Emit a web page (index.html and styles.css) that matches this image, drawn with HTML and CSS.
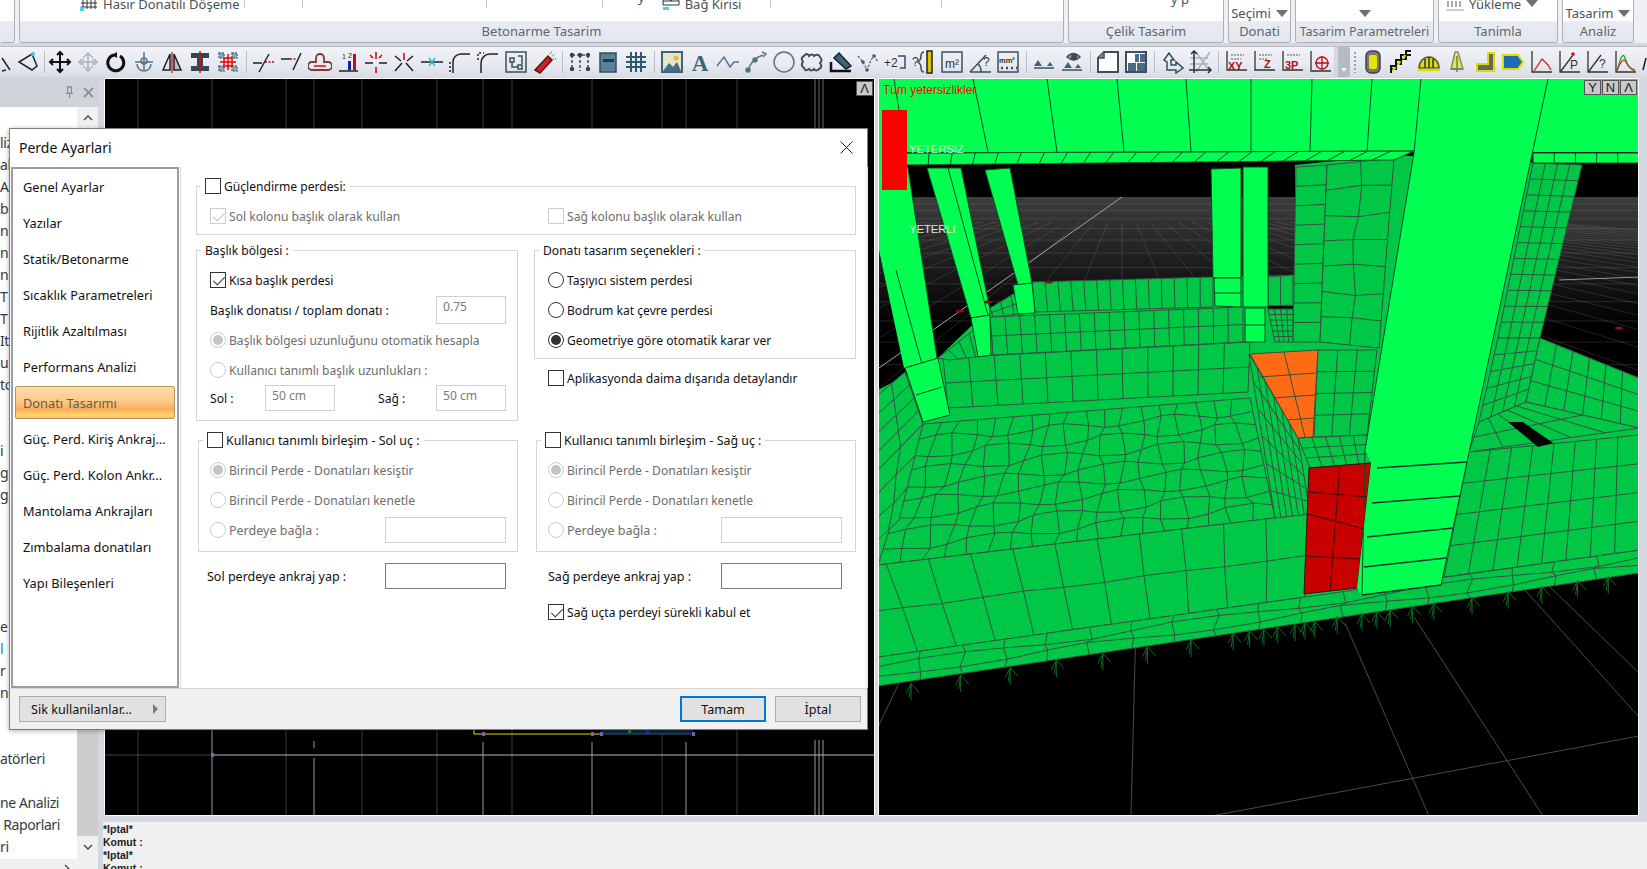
FILE: index.html
```html
<!DOCTYPE html>
<html lang="tr">
<head>
    <meta charset="UTF-8">
    <title>Perde Ayarlari</title>
    <link rel="stylesheet" href="styles.css">
</head>
<body>
    <!-- ribbon, only the lower part is on screen -->
    <div class="ribbon">
        <div class="rb-group g-start"><div class="rb-top"></div><div class="rb-label"></div></div>
        <div class="rb-group g-main">
            <div class="rb-top main-cells">
                <div class="cell c-hasir">
                    <svg class="rb-ic" viewBox="0 0 18 18"><path d="M3 2v14M7 2v14M11 2v14M15 2v14M1 6h16M1 10h16M1 14h16" stroke="#333" fill="none"/><path d="M0 14h4v4H0z" fill="#3cd6ee"/></svg>
                    <span>Hasır Donatılı Döşeme</span>
                </div>
                <div class="cell"></div>
                <div class="cell"></div>
                <div class="cell"></div>
                <div class="cell c-bag">
                    <span class="frag">y</span>
                    <svg class="rb-ic" viewBox="0 0 18 18"><path d="M1 8l4-6 4 6zM9 8l4-6 4 6zM1 8v4h16V8" stroke="#333" fill="none"/><path d="M1 14h6v3H1z" fill="#3cd6ee"/></svg>
                    <span>Bağ Kirisi</span>
                </div>
                <div class="cell"></div>
                <div class="cell"></div>
            </div>
            <div class="rb-label">Betonarme Tasarim</div>
        </div>
        <div class="rb-group g-celik"><div class="rb-top center-top"><span class="frag">y p</span></div><div class="rb-label">Çelik Tasarim</div></div>
        <div class="rb-group g-donati"><div class="rb-top drop-top"><span>Seçimi</span><i class="tri"></i></div><div class="rb-label">Donati</div></div>
        <div class="rb-group g-param"><div class="rb-top drop-top"><i class="tri"></i></div><div class="rb-label tight">Tasarim Parametreleri</div></div>
        <div class="rb-group g-tanim">
            <div class="rb-top yuk-top">
                <svg class="rb-ic" viewBox="0 0 18 12"><path d="M2 1v6M6 1v6M10 1v6M14 1v6" stroke="#556" fill="none"/><path d="M0 10h18" stroke="#7ab" fill="none"/></svg>
                <span>Yükleme</span><i class="tri"></i>
            </div>
            <div class="rb-label">Tanimla</div>
        </div>
        <div class="rb-group g-analiz"><div class="rb-top drop-top"><span>Tasarim</span><i class="tri"></i></div><div class="rb-label">Analiz</div></div>
    </div>

    <!-- toolbars -->
    <div class="toolbars">
        <div class="tb">
            <svg class="ic" viewBox="0 0 24 24"><path d="M14 8l8 12M18 20l-4 1"/></svg>
            <svg class="ic" viewBox="0 0 24 24"><path d="M3 12l13-8 5 12-5 4z"/><circle cx="17" cy="4" r="2" fill="#3ce" stroke="none"/></svg>
            <i class="sep thin"></i>
            <svg class="ic bold" viewBox="0 0 24 24"><path d="M12 2v20M2 12h20M9 5l3-3 3 3M9 19l3 3 3-3M5 9l-3 3 3 3M19 9l3 3-3 3"/></svg>
            <svg class="ic faded" viewBox="0 0 24 24"><path d="M12 3v18M3 12h18M9 6l3-3 3 3M9 18l3 3 3-3M6 9l-3 3 3 3M18 9l3 3-3 3"/><path d="M7 7h10v10H7z" stroke-dasharray="2 2"/></svg>
            <svg class="ic thick" viewBox="0 0 24 24"><path d="M10 5a8 8 0 1 0 6 1"/><path d="M13 2v6l-5-3z" fill="#111" stroke="none"/></svg>
            <svg class="ic blue" viewBox="0 0 24 24"><path d="M12 2v18M3 12h18M5 14a7 7 0 0 0 14 0"/><circle cx="12" cy="11" r="3"/></svg>
            <svg class="ic" viewBox="0 0 24 24"><path d="M10 4L3 20h7z"/><path d="M14 4l7 16h-7z" fill="#bbb"/><path d="M12 2v21" stroke="#b33"/></svg>
            <svg class="ic" viewBox="0 0 24 24"><path d="M3 3h18v5h-6v8h6v5H3v-5h6V8H3z" fill="#2d4a55" stroke="none"/><path d="M12 1v22" stroke="#e00"/></svg>
            <svg class="ic blue" viewBox="0 0 24 24"><path d="M3 3h5v5H3zM16 3h5v5h-5zM3 16h5v5H3zM16 16h5v5h-5z" fill="#8ea6b8" stroke-dasharray="2 1"/><path d="M12 4v16M4 12h16M8 8h8v8H8z" stroke="#e00"/></svg>
            <i class="sep"></i>
            <svg class="ic" viewBox="0 0 24 24"><path d="M1 13h9M17 4L7 22"/><path d="M13 12h9" stroke="#c00" stroke-dasharray="2 1.5"/></svg>
            <svg class="ic" viewBox="0 0 24 24"><path d="M1 9h9M21 3l-8 17"/><path d="M10 9h7" stroke="#c00" stroke-dasharray="2 1.5"/></svg>
            <svg class="ic brown" viewBox="0 0 24 24"><path d="M8 12V8a4 4 0 0 1 8 0v4h4a3 3 0 0 1 0 8H4a3 3 0 0 1 0-8z"/><path d="M6 16h12" stroke="#c33"/></svg>
            <svg class="ic" viewBox="0 0 24 24"><path d="M3 21h19"/><path d="M12 11h3v9h-3z" fill="#12a" stroke="none"/><path d="M17 4h3v16h-3z" fill="#b11" stroke="none"/><text x="6" y="9" class="ic-t">1</text><text x="12" y="8" class="ic-t">2</text></svg>
            <svg class="ic" viewBox="0 0 24 24"><path d="M1 13h8M15 13h8"/><path d="M12 2v7M12 17v6M6 5l3 3M18 5l-3 3" stroke="#c00"/></svg>
            <svg class="ic" viewBox="0 0 24 24"><path d="M3 21l7-8M21 21l-7-8M3 6l6 5M21 6l-6 5"/><path d="M12 3v7" stroke="#c00"/></svg>
            <svg class="ic" viewBox="0 0 24 24"><path d="M1 12h22"/><path d="M9 8l6 8M15 8l-6 8" stroke="#3bd"/></svg>
            <svg class="ic" viewBox="0 0 24 24"><path d="M5 23V12a8 8 0 0 1 8-8h9"/><path d="M2 22V12" stroke-dasharray="2 2"/></svg>
            <svg class="ic" viewBox="0 0 24 24"><path d="M5 23V13a9 9 0 0 1 9-9h8"/><path d="M2 10V3h6" stroke-dasharray="2 2"/></svg>
            <svg class="ic dark" viewBox="0 0 24 24"><path d="M2 2h20v20H2z"/><path d="M6 8h4v4H6zM14 15h4v4h-4zM8 12v5h6M14 6h4v8"/></svg>
            <svg class="ic" viewBox="0 0 24 24"><path d="M3 20L16 6l4 4L8 23z" fill="#c22" stroke="#611"/><path d="M18 4l2-3M20 6l3-2M21 9l3 0" stroke="#888" stroke-dasharray="1 1"/></svg>
            <i class="sep"></i>
            <svg class="ic dark" viewBox="0 0 24 24"><path d="M4 5h16M4 5v16M12 5v16M20 5v16" stroke-dasharray="3 2"/><circle cx="4" cy="5" r="1.5" fill="#222"/><circle cx="12" cy="5" r="1.5" fill="#222"/><circle cx="20" cy="5" r="1.5" fill="#222"/><circle cx="4" cy="19" r="1.5" fill="#222"/><circle cx="20" cy="19" r="1.5" fill="#222"/></svg>
            <svg class="ic" viewBox="0 0 24 24"><path d="M4 3h16v19H4z" fill="#5b8099" stroke="#2f4d5f"/><path d="M7 9h11v3H7z" fill="#1f3a4a" stroke="none"/></svg>
            <svg class="ic dark2" viewBox="0 0 24 24"><path d="M2 7h20M2 12h20M2 17h20M7 2v20M12 2v20M17 2v20" stroke-width="2"/></svg>
            <i class="sep"></i>
            <svg class="ic" viewBox="0 0 24 24"><path d="M2 2h20v20H2z" fill="#e8e4c8" stroke="#3f6378" stroke-width="2"/><path d="M3 21l6-8 4 4 4-5 4 9z" fill="#486f88" stroke="none"/><circle cx="16" cy="8" r="2.5" fill="#e8b93a" stroke="none"/></svg>
            <svg class="ic" viewBox="0 0 24 24"><text x="12" y="21" class="ic-a">A</text></svg>
            <svg class="ic blue" viewBox="0 0 24 24"><path d="M1 16l7-9 6 10 4-5h5"/></svg>
            <svg class="ic blue" viewBox="0 0 24 24"><path d="M4 21a22 22 0 0 1 15-16"/><circle cx="4" cy="20" r="2" fill="#567"/><circle cx="11" cy="10" r="2" fill="#567"/><path d="M18 2l4 2-3 3"/></svg>
            <svg class="ic blue" viewBox="0 0 24 24"><circle cx="12" cy="12" r="10"/></svg>
            <svg class="ic dark" viewBox="0 0 24 24"><path d="M4 6q3-4 5 0 3-3 5 0 4-3 6 1 3 4 0 6 3 4-1 6-3 3-5 0-3 3-5 0-4 3-5-1-4-3-1-6-3-4 1-6z" stroke-width="2"/></svg>
            <svg class="ic" viewBox="0 0 24 24"><path d="M11 3l12 13-5 3L6 8z" fill="#3f6378" stroke="#14232d"/><path d="M3 12v9h20" stroke="#111" stroke-width="2.5"/></svg>
            <svg class="ic thin-blue" viewBox="0 0 24 24"><path d="M2 6l5 6 4 8 4-10 3-4 4 6" stroke-dasharray="2.5 1.5"/><circle cx="7" cy="12" r="1.2" fill="#2c5a74"/><circle cx="11" cy="20" r="1.2" fill="#2c5a74"/><circle cx="18" cy="6" r="1.2" fill="#2c5a74"/></svg>
            <svg class="ic dark" viewBox="0 0 24 24"><text x="0" y="17" class="ic-s">+2</text><path d="M14 6h7v12h-5"/></svg>
            <svg class="ic dark" viewBox="0 0 24 24"><text x="0" y="16" class="ic-s">?</text><path d="M12 2q-3 0-3 4t-3 6q3 2 3 6t3 4"/><path d="M15 1h5v22h-5z" fill="#d9c400" stroke="#222"/></svg>
            <svg class="ic dark" viewBox="0 0 24 24"><path d="M2 2h20v20H2z"/><text x="5" y="18" class="ic-s">m²</text></svg>
            <svg class="ic dark" viewBox="0 0 24 24"><path d="M2 22L18 5M2 22h21M10 14a10 10 0 0 1 3 8"/><text x="15" y="16" class="ic-s">?</text></svg>
            <svg class="ic dark" viewBox="0 0 24 24"><path d="M2 2h20v20H2z"/><text x="3" y="13" class="ic-xs">mm²</text><path d="M5 18h2M10 18h2M15 18h2M20 18h1" stroke-width="2.5"/></svg>
            <i class="sep"></i>
            <svg class="ic dark" viewBox="0 0 24 24"><path d="M2 18h20"/><path d="M6 10l4 6H2zM18 12l3 4h-6z" fill="#3f6378" stroke="none"/></svg>
            <svg class="ic dark" viewBox="0 0 24 24"><path d="M2 20h20"/><path d="M8 12l4 6H4zM18 14l3 4h-6z" fill="#3f6378" stroke="none"/><path d="M7 7q6-7 13 0-6 6-13 0z" fill="#aab" /><circle cx="14" cy="7" r="2.5" fill="#444"/></svg>
            <i class="sep"></i>
            <svg class="ic dark" viewBox="0 0 24 24"><path d="M8 2h14v20H2V8z" fill="#fff" stroke-width="2"/><path d="M2 8h6V2" fill="#888"/></svg>
            <svg class="ic dark" viewBox="0 0 24 24"><path d="M2 2h20v20H2z" fill="#fff" stroke-width="2"/><path d="M11 4h4v8h-4zM16 4h5v8h-5zM4 13h8v8H4zM13 13h8v8h-8z" fill="#4a6b85" stroke="none"/></svg>
            <i class="sep"></i>
            <svg class="ic dark" viewBox="0 0 24 24"><path d="M4 10l5-7 5 7h-3v5h5v-3l7 6-7 5v-3H7v-8z" stroke="#30505f"/></svg>
            <svg class="ic faded" viewBox="0 0 24 24"><path d="M8 2L22 22M22 2L8 22M2 8h18M2 14h18"/><path d="M6 1v22M1 20h22M3 4l3-3 3 3M20 17l3 3-3 3" stroke="#234"/></svg>
            <i class="sep"></i>
            <svg class="ic axis" viewBox="0 0 24 24"><path d="M3 1v19h20"/><path d="M7 5h13M7 9h10" stroke="#889" stroke-dasharray="2 1"/><text x="4" y="20" class="ic-r">XY</text></svg>
            <svg class="ic axis" viewBox="0 0 24 24"><path d="M3 1v19h20"/><path d="M7 5h13M7 9h8" stroke="#889" stroke-dasharray="2 1"/><text x="12" y="18" class="ic-r">Z</text></svg>
            <svg class="ic axis" viewBox="0 0 24 24"><path d="M3 1v19h20"/><path d="M7 5h13" stroke="#889" stroke-dasharray="2 1"/><text x="5" y="19" class="ic-r">3P</text></svg>
            <svg class="ic axis" viewBox="0 0 24 24"><path d="M3 1v20h20"/><circle cx="14" cy="13" r="6" stroke="#b11"/><path d="M14 6v14M7 13h14" stroke="#b11"/></svg>
        </div>
        <div class="tb-handle"><i class="tri small"></i></div>
        <div class="tb tb2">
            <i class="gripper"></i>
            <svg class="ic" viewBox="0 0 24 24"><rect x="5" y="1" width="14" height="22" rx="5" fill="#777" stroke="#444"/><rect x="8" y="5" width="8" height="14" rx="2" fill="#e6e600" stroke="none"/></svg>
            <svg class="ic" viewBox="0 0 24 24"><path d="M2 23v-7h5v-6h5V5h5V1h5M2 19h5v-5h5v-5h5V5h5" stroke="#111" stroke-width="2"/><path d="M4 21l2-4M9 15l2-4M14 9l2-4" stroke="#dd0" stroke-width="2.5"/></svg>
            <svg class="ic" viewBox="0 0 24 24"><path d="M2 18a10 11 0 0 1 20 0z" fill="#dd0" stroke="#555"/><path d="M8 18V9M12 18V7M16 18V9" stroke="#333"/><path d="M1 20h22" stroke="#dd0" stroke-width="2.5"/></svg>
            <svg class="ic" viewBox="0 0 24 24"><path d="M10 2h3l5 17H6z" fill="#e6e63c" stroke="#888"/><path d="M12 6v16M6 19h12" stroke="#777"/></svg>
            <svg class="ic" viewBox="0 0 24 24"><path d="M15 3h6v18H4v-7h11z" fill="#666" stroke="#dd0" stroke-width="2"/></svg>
            <svg class="ic" viewBox="0 0 24 24"><path d="M2 5h15l5 7-5 7H2z" fill="#1c6cb8" stroke="#dd0" stroke-width="2"/></svg>
            <svg class="ic axis" viewBox="0 0 24 24"><path d="M3 1v21h20"/><path d="M5 21l8-12 6 6 3 5" stroke="#c22"/></svg>
            <svg class="ic axis" viewBox="0 0 24 24"><path d="M3 1v21h20M4 21L16 5"/><circle cx="16" cy="4" r="1.8" fill="#e00" stroke="none"/><text x="13" y="19" class="ic-s">P</text></svg>
            <svg class="ic axis" viewBox="0 0 24 24"><path d="M3 1v21h20M4 21L16 5"/><text x="14" y="18" class="ic-s">?</text></svg>
            <svg class="ic axis" viewBox="0 0 24 24"><path d="M3 1v21h20"/><path d="M4 21C8 6 10 2 12 8s4 11 10 12" stroke="#2a2"/><path d="M4 21C8 10 11 8 13 12s4 7 9 9" stroke="#c33"/></svg>
            <svg class="ic" viewBox="0 0 24 24"><path d="M5 8l-3 12"/></svg>
        </div>
    </div>

    <div class="workspace">
        <!-- left tree panel, mostly behind the dialog -->
        <aside class="side">
            <div class="side-head">
                <svg class="head-ic" viewBox="0 0 12 14"><path d="M3 1h6M4 1v7M8 1v7M2 8h8M6 8v5" stroke="#8b8f96" stroke-width="1.4" fill="none"/></svg>
                <svg class="head-ic" viewBox="0 0 12 12"><path d="M1 1l10 10M11 1L1 11" stroke="#8b8f96" stroke-width="2" fill="none"/></svg>
            </div>
            <div class="side-body">
                <div class="tree">
                    <div>liz</div><div>al</div><div>A</div><div>be</div><div>n S</div><div>n S</div><div>ni</div>
                    <div>T</div><div>T</div><div>It</div><div>ul</div><div>to</div><div></div><div></div>
                    <div>i</div><div>gi</div><div>gi</div><div></div><div></div><div></div><div></div><div></div>
                    <div>e</div><div class="link">l</div><div>r</div><div>ne</div><div></div><div></div>
                    <div>atörleri</div><div></div><div>ne Analizi</div><div>&nbsp;Raporlari</div><div>ri</div>
                </div>
                <div class="side-scroll">
                    <svg class="chev" viewBox="0 0 10 6"><path d="M1 5l4-4 4 4" fill="none" stroke="#444" stroke-width="1.4"/></svg>
                    <i class="thumb"></i>
                    <svg class="chev" viewBox="0 0 10 6"><path d="M1 1l4 4 4-4" fill="none" stroke="#444" stroke-width="1.4"/></svg>
                </div>
            </div>
            <div class="side-foot">
                <svg class="chev" viewBox="0 0 6 10"><path d="M1 1l4 4-4 4" fill="none" stroke="#444" stroke-width="1.4"/></svg>
            </div>
        </aside>

        <div class="center">
            <div class="views">
                <div class="view view-plan">
                    <svg class="plan" viewBox="105 79 769 736">
                        <g stroke="#3c3c3c" fill="none">
                            <path d="M138 79v736M286 79v736M362 79v736M437 79v736M512 79v736M662 79v736M737 79v736M212 79v50M314 79v50M483 79v50M592 79v50M686 79v50"/>
                        </g>
                        <g stroke="#6a6a6a" fill="none">
                            <path d="M815 79v50M819 79v50M823 79v50"/>
                        </g>
                        <g stroke="#9a9a9a" fill="none">
                            <path d="M815 740v76M819 740v76M823 740v76M212 729v87"/>
                            <path d="M314 741v7M314 758v58M483 742v74M592 742v74M686 742v74"/>
                        </g>
                        <path d="M105 755h107" stroke="#444"/>
                        <path d="M212 755h663" stroke="#b5b5b5"/>
                        <path d="M601 720h92v14h-92z" fill="#0e2a30"/>
                        <path d="M474 720v14h126" stroke="#e8e800" fill="none"/>
                        <path d="M600 734h93" stroke="#2d4fa8"/>
                        <path d="M211 753h3v4h-3zM482 732h3v4h-3zM591 732h3v4h-3zM600 732h3v4h-3zM692 732h3v4h-3z" fill="#8a5ac8"/>
                        <path d="M628 728h3v5h-3z" fill="#1a8a2a"/>
                        <path d="M646 727h3v7h-3z" fill="#27309a"/>
                    </svg>
                    <span class="view-btn plan-btn">Λ</span>
                </div>
                <div class="view view-3d">
                    <svg id="scene" class="scene" viewBox="880 79 759 736"></svg>
                    <div class="scene-title">Tüm yetersizlikler</div>
                    <i class="scene-bar"></i>
                    <div class="scene-lbl lbl-bad">YETERSIZ</div>
                    <div class="scene-lbl lbl-ok">YETERLI</div>
                    <div class="scene-btns"><span class="view-btn">Y</span><span class="view-btn">N</span><span class="view-btn">Λ</span></div>
                </div>
            </div>
            <div class="command">
                <div>*Iptal*</div>
                <div>Komut :</div>
                <div>*Iptal*</div>
                <div>Komut :</div>
            </div>
        </div>
    </div>

    <!-- dialog -->
    <div class="dialog">
        <div class="dlg-title">
            <span>Perde Ayarlari</span>
            <svg class="dlg-close" viewBox="0 0 13 13"><path d="M.5.5l12 12M12.5.5l-12 12" stroke="#222" fill="none"/></svg>
        </div>
        <div class="dlg-body">
            <nav class="nav">
                <div class="nav-item">Genel Ayarlar</div>
                <div class="nav-item">Yazılar</div>
                <div class="nav-item">Statik/Betonarme</div>
                <div class="nav-item">Sıcaklık Parametreleri</div>
                <div class="nav-item">Rijitlik Azaltılması</div>
                <div class="nav-item">Performans Analizi</div>
                <div class="nav-item active">Donatı Tasarımı</div>
                <div class="nav-item">Güç. Perd. Kiriş Ankraj...</div>
                <div class="nav-item">Güç. Perd. Kolon Ankr...</div>
                <div class="nav-item">Mantolama Ankrajları</div>
                <div class="nav-item">Zımbalama donatıları</div>
                <div class="nav-item">Yapı Bileşenleri</div>
            </nav>
            <div class="panel">
                <fieldset class="group">
                    <legend><i class="cb"></i>Güçlendirme perdesi:</legend>
                    <div class="row-pair">
                        <div class="row off"><i class="cb on"></i>Sol kolonu başlık olarak kullan</div>
                        <div class="row off"><i class="cb"></i>Sağ kolonu başlık olarak kullan</div>
                    </div>
                </fieldset>
                <div class="columns">
                    <fieldset class="group pad-b">
                        <legend>Başlık bölgesi :</legend>
                        <div class="row"><i class="cb on"></i>Kısa başlık perdesi</div>
                        <div class="row between">Başlık donatısı / toplam donatı :<input class="input short tall" value="0.75" disabled></div>
                        <div class="row off"><i class="rb on"></i>Başlık bölgesi uzunluğunu otomatik hesapla</div>
                        <div class="row off"><i class="rb"></i>Kullanıcı tanımlı başlık uzunlukları :</div>
                        <div class="row row-sm lengths">
                            <span>Sol :</span><input class="input short" value="50 cm" disabled>
                            <span class="lbl-sag">Sağ :</span><input class="input short" value="50 cm" disabled>
                        </div>
                    </fieldset>
                    <div>
                        <fieldset class="group">
                            <legend>Donatı tasarım seçenekleri :</legend>
                            <div class="row"><i class="rb"></i>Taşıyıcı sistem perdesi</div>
                            <div class="row"><i class="rb"></i>Bodrum kat çevre perdesi</div>
                            <div class="row"><i class="rb on"></i>Geometriye göre otomatik karar ver</div>
                        </fieldset>
                        <div class="row single"><i class="cb"></i>Aplikasyonda daima dışarıda detaylandır</div>
                    </div>
                    <fieldset class="group inset pad-s">
                        <legend><i class="cb"></i>Kullanıcı tanımlı birleşim - Sol uç :</legend>
                        <div class="row off"><i class="rb on"></i>Birincil Perde - Donatıları kesiştir</div>
                        <div class="row off"><i class="rb"></i>Birincil Perde - Donatıları kenetle</div>
                        <div class="row off between"><span class="opt"><i class="rb"></i>Perdeye bağla :</span><input class="input wide" disabled></div>
                    </fieldset>
                    <fieldset class="group inset inset-r pad-s">
                        <legend><i class="cb"></i>Kullanıcı tanımlı birleşim - Sağ uç :</legend>
                        <div class="row off"><i class="rb on"></i>Birincil Perde - Donatıları kesiştir</div>
                        <div class="row off"><i class="rb"></i>Birincil Perde - Donatıları kenetle</div>
                        <div class="row off between"><span class="opt"><i class="rb"></i>Perdeye bağla :</span><input class="input wide" disabled></div>
                    </fieldset>
                    <div class="row between anchor anchor-l">Sol perdeye ankraj yap :<input class="input wide live"></div>
                    <div class="row between anchor anchor-r">Sağ perdeye ankraj yap :<input class="input wide live"></div>
                    <div></div>
                    <div class="row single last"><i class="cb on"></i>Sağ uçta perdeyi sürekli kabul et</div>
                </div>
            </div>
        </div>
        <div class="dlg-foot">
            <button class="btn btn-fav">Sik kullanilanlar...<i class="tri-r"></i></button>
            <button class="btn btn-ok">Tamam</button>
            <button class="btn">İptal</button>
        </div>
    </div>

    <script src="scene.js"></script>
</body>
</html>
```

FILE: styles.css
```css
* {
    box-sizing: border-box;
}
html, body {
    margin: 0;
    height: 100%;
}
body {
    width: 1647px;
    height: 869px;
    overflow: hidden;
    position: relative;
    display: flex;
    flex-direction: column;
    background: #d3d7df;
    font-family: "Noto Sans", sans-serif;
    font-size: 12.5px;
    color: #111;
}

/* ribbon */
.ribbon {
    display: flex;
    gap: 4px;
    height: 43px;
    background: #eef0f4;
    flex: none;
}
.rb-group {
    display: flex;
    flex-direction: column;
    border: 1px solid #adb1b7;
    border-top: none;
    border-radius: 0 0 3px 3px;
    background: #fff;
    overflow: hidden;
}
.g-start { width: 15px; border-left: none; }
.g-main { width: 1045px; }
.g-celik { width: 156px; }
.g-donati { width: 63px; }
.g-param { width: 139px; }
.g-tanim { width: 120px; }
.g-analiz { width: 72px; }
.rb-top {
    height: 21px;
    overflow: hidden;
    color: #4a5258;
}
.rb-label {
    height: 21px;
    background: linear-gradient(#e9ecf2, #e2e5ec);
    color: #5d676e;
    font-size: 13px;
    line-height: 21px;
    text-align: center;
    white-space: nowrap;
}
.rb-label.tight { font-size: 12.5px; }
.main-cells {
    display: grid;
    grid-template-columns: 225px 58px 184px 116px 168px 171px 1fr;
}
.cell {
    display: flex;
    gap: 5px;
    height: 8px;
    border-right: 1px solid #c4c7cc;
    line-height: 8px;
    font-size: 13px;
}
.cell:last-child { border: none; }
.c-hasir { padding-left: 60px; }
.c-bag { padding-left: 35px; }
.rb-ic {
    width: 18px;
    height: 18px;
    margin-top: -7px;
    flex: none;
}
.frag {
    margin-top: -7px;
    font-size: 13px;
    line-height: 8px;
    margin-right: 12px;
}
.center-top {
    display: flex;
    justify-content: center;
    padding-left: 80px;
}
.center-top .frag {
    margin-top: -5px;
}
.drop-top {
    display: flex;
    justify-content: center;
    align-items: center;
    gap: 5px;
    padding-top: 5px;
    font-size: 13px;
}
.yuk-top {
    display: flex;
    gap: 5px;
    line-height: 8px;
    padding-left: 7px;
    font-size: 13px;
}
.tri {
    width: 0;
    height: 0;
    border-left: 6px solid transparent;
    border-right: 6px solid transparent;
    border-top: 7px solid #6c6f74;
    flex: none;
}
.yuk-top .tri {
    margin-top: 0;
}
.yuk-top .rb-ic {
    margin-top: -3px;
}

/* toolbars */
.toolbars {
    display: flex;
    flex: none;
    height: 31px;
    margin-top: 3px;
    border-top: 1px solid #b9bdc4;
    overflow: hidden;
}
.tb {
    display: flex;
    align-items: center;
    flex: none;
    margin-left: -14px;
    background: linear-gradient(#f1f3f8, #e6e9f0 60%, #d8dce5);
}
.tb2 {
    margin-left: 0;
    width: 297px;
}
.tb-handle {
    display: flex;
    align-items: flex-end;
    justify-content: center;
    width: 12px;
    margin-left: 4px;
    padding-bottom: 5px;
    background: #b6bac2;
    border-radius: 0 3px 3px 0;
    flex: none;
}
.tri.small {
    border-left-width: 3px;
    border-right-width: 3px;
    border-top-width: 4px;
    border-top-color: #f4f4f4;
}
.gripper {
    width: 9px;
    height: 22px;
    flex: none;
    background: radial-gradient(circle, #9a9ea6 1px, transparent 1.2px) 1px 0 / 8px 4px;
}
.sep {
    width: 8px;
    height: 22px;
    flex: none;
    background: linear-gradient(#b9bdc4, #b9bdc4) center / 1px 100% no-repeat;
}
.sep.thin { width: 4px; }
.ic {
    width: 24px;
    height: 24px;
    margin: 0 2px;
    flex: none;
    fill: none;
    stroke: #222;
    stroke-width: 1.5;
}
.ic.bold { stroke-width: 2; stroke: #111; }
.ic.thick { stroke-width: 3; stroke: #111; }
.ic.faded { stroke: #a8b4be; }
.ic.blue { stroke: #5a7488; }
.ic.thin-blue { stroke: #3f6378; stroke-width: 1.2; }
.ic.brown { stroke: #7a3a38; stroke-width: 1.8; }
.ic.dark { stroke: #3d4f5b; }
.ic.dark2 { stroke: #2c5a74; }
.ic.axis { stroke: #333; stroke-width: 1.3; }
.ic text {
    font-family: "Liberation Sans", sans-serif;
    stroke: none;
}
.ic-t { font-size: 7px; fill: #222; }
.ic-s { font-size: 12px; fill: #333; }
.ic-xs { font-size: 7.5px; fill: #333; font-weight: bold; }
.ic-r { font-size: 11px; font-weight: bold; fill: #b01010; }
.ic .ic-a {
    font-family: "Liberation Serif", serif;
    font-size: 23px;
    font-weight: bold;
    fill: #3f6378;
    text-anchor: middle;
}

/* workspace */
.workspace {
    display: flex;
    flex: 1;
    min-height: 0;
    gap: 6px;
    padding-top: 0;
}
.side {
    display: flex;
    flex-direction: column;
    width: 98px;
    flex: none;
    background: #f0f0f0;
}
.side-head {
    display: flex;
    justify-content: flex-end;
    align-items: center;
    gap: 8px;
    height: 30px;
    padding-right: 4px;
    background: #d0d3da;
    flex: none;
}
.head-ic {
    width: 11px;
    height: 13px;
}
.side-body {
    display: flex;
    height: 752px;
    flex: none;
}
.tree {
    width: 77px;
    padding-top: 25px;
    background: #fff;
    overflow: hidden;
    font-size: 14px;
    letter-spacing: -.4px;
    color: #333c42;
}
.tree div {
    height: 22px;
    line-height: 22px;
    white-space: nowrap;
}
.tree .link {
    color: #1a7fd0;
}
.side-scroll {
    display: flex;
    flex-direction: column;
    align-items: center;
    justify-content: space-between;
    width: 21px;
    padding: 8px 0 9px;
    background: #f0f0f0;
}
.side-scroll .thumb {
    flex: 1;
    width: 100%;
    margin: 8px 0;
    background: #cdcdcd;
}
.chev {
    width: 10px;
    height: 6px;
    flex: none;
}
.side-foot {
    display: flex;
    justify-content: flex-end;
    padding: 5px 28px 0 0;
}
.side-foot .chev {
    width: 6px;
    height: 10px;
}
.center {
    display: flex;
    flex: 1;
    flex-direction: column;
    min-width: 0;
}
.views {
    display: flex;
    gap: 4px;
    height: 739px;
    padding: 1px 7px 0 0;
    flex: none;
}
.view {
    position: relative;
    background: #000;
    border: 1px solid #fff;
    overflow: hidden;
    flex: none;
}
.view-plan { width: 771px; }
.view-3d { width: 761px; margin-left: -1px; }
.plan, .scene {
    display: block;
    width: 100%;
    height: 100%;
}
.view-btn {
    display: inline-block;
    width: 17px;
    height: 15px;
    background: #c9c9c9;
    border: 1px solid #555;
    color: #222;
    font: 13px/13px "Liberation Sans", sans-serif;
    text-align: center;
}
.plan-btn {
    position: absolute;
    top: 2px;
    right: 1px;
}
.scene-btns {
    position: absolute;
    top: 1px;
    right: 1px;
    display: flex;
    gap: 1px;
}
.scene-title {
    position: absolute;
    top: 3px;
    left: 4px;
    color: #f00;
    font: 12px/16px "Liberation Sans", sans-serif;
}
.scene-bar {
    position: absolute;
    top: 31px;
    left: 3px;
    width: 25px;
    height: 80px;
    background: #f00;
}
.scene-lbl {
    position: absolute;
    left: 30px;
    color: #d5e6db;
    font: 11.5px/14px "Liberation Sans", sans-serif;
    letter-spacing: -.2px;
}
.lbl-bad { top: 63px; }
.lbl-ok { top: 143px; }
.command {
    flex: 1;
    margin-top: 6px;
    margin-left: -1px;
    padding-top: 1px;
    background: #f0f0f0;
    overflow: hidden;
    font: bold 10.5px/13px "Liberation Sans", sans-serif;
    color: #222;
}

/* dialog */
.dialog {
    position: absolute;
    left: 9px;
    top: 128px;
    width: 859px;
    height: 602px;
    display: flex;
    flex-direction: column;
    background: #fff;
    border: 1px solid #7d7d7d;
    box-shadow: 0 1px 5px rgba(0, 0, 0, .3);
}
.dlg-title {
    display: flex;
    justify-content: space-between;
    align-items: center;
    height: 38px;
    padding: 0 14px 2px 9px;
    font-size: 14px;
    flex: none;
}
.dlg-close {
    width: 13px;
    height: 13px;
}
.dlg-body {
    display: flex;
    height: 522px;
    flex: none;
    padding-left: 1px;
    border-bottom: 1px solid #d8d8d8;
}
.nav {
    width: 168px;
    flex: none;
    border: 2px solid #9a9da6;
    font-size: 12.8px;
}
.nav-item {
    display: flex;
    align-items: center;
    height: 36px;
    padding-left: 10px;
    white-space: nowrap;
}
.nav-item.active {
    height: 33px;
    margin: 1px 2px 2px 2px;
    padding-left: 7px;
    border: 1px solid #b8935a;
    border-radius: 2px;
    color: #6b5c48;
    background: linear-gradient(#fddcaa, #fcc98a 45%, #f9ad58 72%, #ffd96f 92%, #f9b860);
}
.panel {
    flex: 1;
    margin-left: 1px;
    padding: 11px 9px 0 15px;
    border-left: 1px solid #dcdcdc;
    border-right: 3px solid #f0f0f0;
    font-size: 12.1px;
}
.group {
    margin: 0;
    padding: 7px 11px 3px 13px;
    min-width: 0;
    border: 1px solid #d6d6d6;
}
.group legend {
    display: flex;
    align-items: center;
    gap: 3px;
    height: 16px;
    margin-left: -9px;
    padding: 0 4px;
    white-space: nowrap;
}
.group.pad-b { padding-bottom: 9px; }
.group.pad-s { padding-bottom: 6px; }
.group.inset {
    margin-left: 2px;
    padding-left: 11px;
}
.group.inset legend {
    margin-left: -7px;
    font-size: 12.4px;
}
.group.inset-r { padding-right: 13px; }
.columns {
    display: grid;
    grid-template-columns: 322px 322px;
    column-gap: 16px;
    margin-top: 7px;
    row-gap: 11px;
}
.row-pair {
    display: grid;
    grid-template-columns: 338px 1fr;
}
.row {
    display: flex;
    align-items: center;
    gap: 3px;
    height: 30px;
    white-space: nowrap;
}
.row.off { color: #6d6d6d; }
.row.between { justify-content: space-between; }
.row-sm { height: 26px; }
.lengths { gap: 0; }
.lengths span { width: 55px; flex: none; }
.lengths .lbl-sag { width: 58px; margin-left: 43px; }
.opt {
    display: flex;
    align-items: center;
    gap: 3px;
    font-size: 12.5px;
}
.single {
    height: 16px;
    margin-top: 11px;
    margin-left: 14px;
}
.single.last { margin-top: 4px; }
.anchor { height: 26px; font-size: 12.5px; }
.anchor-l { padding: 0 12px 0 11px; }
.anchor-r { padding: 0 14px; }
.cb, .rb {
    display: inline-block;
    position: relative;
    width: 16px;
    height: 16px;
    flex: none;
    background: #fff;
    border: 1px solid #333;
}
.rb { border-radius: 50%; }
.off .cb, .off .rb { border-color: #cccccc; }
.cb.on::after {
    content: "";
    position: absolute;
    left: 4.5px;
    top: 1px;
    width: 5px;
    height: 10px;
    border: solid #333;
    border-width: 0 1.5px 1.5px 0;
    transform: rotate(45deg);
}
.off .cb.on::after { border-color: #c4c4c4; }
.rb.on::after {
    content: "";
    position: absolute;
    left: 2px;
    top: 2px;
    width: 10px;
    height: 10px;
    border-radius: 50%;
    background: #333;
}
.off .rb.on::after { background: #c4c4c4; }
.input {
    height: 26px;
    padding: 0 0 5px 6px;
    border: 1px solid #cfcfcf;
    background: #fff;
    font: inherit;
    color: #7a7a7a;
    flex: none;
}
.input.short { width: 70px; }
.input.tall { height: 28px; padding-bottom: 8px; }
.input.wide { width: 121px; }
.input.live { border-color: #7a7a7a; }
.dlg-foot {
    display: flex;
    align-items: center;
    gap: 9px;
    flex: 1;
    padding: 0 6px 0 9px;
    background: #f0f0f0;
}
.btn {
    position: relative;
    width: 86px;
    height: 26px;
    padding: 0;
    background: #e1e1e1;
    border: 1px solid #adadad;
    font: inherit;
    font-size: 12.6px;
    color: #111;
}
.btn-fav {
    width: 147px;
    margin-right: auto;
    padding-left: 11px;
    text-align: left;
}
.btn-ok { border: 2px solid #0078d7; }
.tri-r {
    position: absolute;
    right: 7px;
    top: 7px;
    width: 0;
    height: 0;
    border-top: 5px solid transparent;
    border-bottom: 5px solid transparent;
    border-left: 5px solid #7a7a7a;
}
```

FILE: scene.js
```js
// 3D mesh view, everything in screen coordinates
const BRIGHT = '#00ff50';
const MESH = '#00c846';
const LINE = '#37503f';
let out = '';

function poly(pts, fill, stroke) {
    out += '<polygon points="' + pts.map(p => p.join(',')).join(' ') + '" fill="' + fill +
        '" stroke="' + (stroke || 'none') + '"/>';
}
function line(a, b, color, w) {
    out += '<path d="M' + a + 'L' + b + '" stroke="' + color + '" stroke-width="' + (w || 1) + '" fill="none"/>';
}
function at(q, u, v, jit) {
    const x = (q[0][0] * (1 - u) + q[1][0] * u) * (1 - v) + (q[3][0] * (1 - u) + q[2][0] * u) * v;
    const y = (q[0][1] * (1 - u) + q[1][1] * u) * (1 - v) + (q[3][1] * (1 - u) + q[2][1] * u) * v;
    if (!jit || u === 0 || u === 1 || v === 0 || v === 1) return [x, y];
    return [x + Math.sin(u * 37 + v * 11) * jit, y + Math.sin(u * 19 - v * 29) * jit];
}
// quad p0 p1 p2 p3 cut in nu x nv cells, lines go node to node
function mesh(q, nu, nv, opt) {
    opt = opt || {};
    const jit = opt.jit || 0;
    poly(q, opt.fill || MESH);
    let d = '';
    for (let i = 0; i <= nu; i++) {
        for (let j = 0; j <= nv; j++) {
            const p = at(q, i / nu, j / nv, jit);
            d += (j ? 'L' : 'M') + p[0].toFixed(1) + ' ' + p[1].toFixed(1);
        }
    }
    for (let j = 0; j <= nv; j++) {
        for (let i = 0; i <= nu; i++) {
            const p = at(q, i / nu, j / nv, jit);
            d += (i ? 'L' : 'M') + p[0].toFixed(1) + ' ' + p[1].toFixed(1);
        }
    }
    out += '<path d="' + d + '" fill="none" stroke="' + (opt.line || LINE) + '"/>';
}

// floor with perspective grid
out += '<defs><linearGradient id="fl" x1="0" y1="0" x2="0" y2="1"><stop offset="0" stop-color="#3d3d3d"/>' +
    '<stop offset=".45" stop-color="#202020"/><stop offset="1" stop-color="#000"/></linearGradient></defs>';
out += '<rect x="879" y="197" width="761" height="130" fill="url(#fl)"/>';
for (let k = -30; k <= 30; k++) {
    line([1123 + k * 14, 222], [1123 + k * 110, 460], 'rgba(140,140,140,.3)', 0.8);
}
for (let i = 0, y = 204; y < 430; i++, y += 5 + i * 1.6) {
    line([879, y.toFixed(1)], [1640, y.toFixed(1)], 'rgba(140,140,140,.3)', 0.8);
}
line([1123, 197], [880, 368], '#a5a5a5');
line([1640, 277], [1560, 280], '#999');

// grid below the building
[[[1137, 620], [1132, 816]], [[1346, 623], [1430, 816]], [[1415, 617], [1544, 816]],
 [[1526, 590], [1640, 717]], [[1551, 587], [1640, 673]], [[900, 683], [879, 727]],
 [[1212, 816], [1640, 736]]].forEach(l => line(l[0], l[1], '#4a4a4a'));

// mesh body
poly([[879, 390], [939, 358], [991, 308], [1033, 282], [1296, 275], [1296, 165], [1395, 155], [1583, 165],
      [1541, 338], [1640, 378], [1640, 573], [879, 686]], MESH);

// back walls
mesh([[1033, 282], [1214, 277], [1214, 307], [1036, 312]], 14, 1);
mesh([[1269, 277], [1294, 275], [1294, 305], [1269, 306]], 2, 1);
mesh([[991, 308], [1033, 283], [1036, 312], [994, 317]], 4, 2);
mesh([[991, 317], [1244, 307], [1244, 342], [994, 355]], 17, 2);
mesh([[944, 358], [1251, 342], [1249, 392], [949, 408]], 12, 2);
mesh([[939, 358], [991, 317], [994, 355], [950, 360]], 5, 1);
poly([[1269, 306], [1294, 306], [1294, 309], [1269, 309]], '#000');
mesh([[1269, 309], [1294, 309], [1294, 342], [1276, 342]], 4, 6);

// floor slab and left wedge
mesh([[879, 395], [906, 372], [924, 424], [879, 470]], 2, 4);
mesh([[924, 424], [1251, 398], [1276, 518], [879, 565]], 18, 9, { jit: 4 });
mesh([[879, 470], [924, 424], [900, 520], [879, 540]], 2, 3, { jit: 2 });

// low front wall and footing
mesh([[845, 569], [1309, 514], [1306, 597], [880, 657]], 11, 2, { jit: 1 });
mesh([[879, 657], [1640, 550], [1640, 573], [879, 686]], 18, 3, { jit: 3 });

// mid wall by the big column
mesh([[1297, 167], [1328, 165], [1321, 342], [1294, 342]], 1, 9);
mesh([[1328, 165], [1395, 158], [1380, 348], [1321, 342]], 2, 7, { jit: 3 });
mesh([[1319, 350], [1378, 350], [1368, 435], [1315, 437]], 3, 4);
mesh([[1250, 354], [1299, 438], [1311, 514], [1276, 518]], 6, 6);
mesh([[1299, 438], [1368, 435], [1372, 463], [1311, 468]], 5, 3);

// right side walls
mesh([[1534, 163], [1583, 165], [1541, 338], [1499, 338]], 4, 11);
mesh([[1499, 338], [1541, 338], [1527, 402], [1480, 422]], 4, 5);
mesh([[1541, 338], [1640, 378], [1640, 428], [1527, 402]], 6, 3);
mesh([[1480, 422], [1527, 402], [1640, 428], [1470, 452]], 5, 2);
mesh([[1470, 452], [1640, 435], [1640, 550], [1445, 577]], 8, 4);
poly([[1509, 422], [1524, 422], [1554, 443], [1539, 447]], '#000');

// orange and red panels
poly([[1251, 354], [1319, 350], [1314, 437], [1299, 438]], '#ff6a14', LINE);
line([1285, 352], [1306, 437], LINE);
line([1261, 377], [1317, 373], LINE);
line([1274, 398], [1316, 395], LINE);
line([1289, 420], [1315, 418], LINE);
poly([[1310, 468], [1372, 463], [1358, 588], [1305, 594]], '#c80000', '#30130f');
line([1341, 466], [1331, 591], '#30130f');
line([1310, 492], [1368, 497], '#30130f');
line([1309, 514], [1365, 529], '#30130f');
line([1306, 556], [1360, 559], '#30130f');

// bright columns on the left and in the back
const EDGE = '#0b4a24';
poly([[879, 155], [907, 155], [938, 358], [905, 368], [879, 245]], BRIGHT);
line([897, 270], [924, 368], EDGE);
line([907, 155], [938, 358], EDGE);
poly([[906, 368], [939, 358], [951, 415], [924, 422]], BRIGHT, EDGE);
line([917, 395], [943, 387], EDGE);
poly([[928, 168], [962, 168], [991, 310], [991, 315], [972, 318]], BRIGHT, EDGE);
line([949, 168], [989, 315], EDGE);
poly([[972, 318], [991, 315], [992, 355], [979, 357]], BRIGHT, EDGE);
poly([[986, 170], [1011, 168], [1033, 283], [1019, 285]], BRIGHT, EDGE);
poly([[1014, 285], [1033, 283], [1036, 313], [1019, 314]], BRIGHT, EDGE);
poly([[1212, 169], [1242, 168], [1242, 278], [1214, 278]], BRIGHT, EDGE);
poly([[1215, 278], [1242, 278], [1242, 307], [1216, 306]], BRIGHT, EDGE);
line([1215, 293], [1242, 293], EDGE);
poly([[1244, 167], [1269, 167], [1269, 307], [1244, 307]], BRIGHT, EDGE);
poly([[1246, 308], [1266, 308], [1266, 342], [1246, 342]], BRIGHT, EDGE);
line([1246, 325], [1266, 325], EDGE);

// slab and beam on top
poly([[879, 79], [1640, 79], [1640, 152], [1415, 152], [907, 152], [879, 165]], BRIGHT);
[[974, 989], [1048, 1058], [1118, 1125], [1187, 1192], [1252, 1252], [1313, 1311], [1373, 1368]].forEach(x => {
    line([x[0], 79], [x[1], 152], EDGE);
});
line([895, 79], [907, 152], EDGE);
mesh([[907, 153], [1415, 151], [1395, 160], [907, 165]], 22, 1, { fill: BRIGHT, line: EDGE });
mesh([[1534, 153], [1640, 153], [1640, 163], [1534, 163]], 5, 1, { fill: BRIGHT, line: EDGE });
line([907, 153], [1415, 151], '#063');

// big column in front
poly([[1422, 79], [1549, 79], [1442, 585], [1363, 595], [1358, 588], [1372, 463], [1366, 450], [1415, 153]], BRIGHT);
line([1422, 79], [1415, 153], EDGE);
line([1415, 153], [1366, 450], EDGE);
line([1366, 450], [1363, 595], EDGE);
line([1549, 79], [1442, 585], EDGE);
line([1378, 468], [1468, 462], '#033', 1.5);
line([1373, 503], [1461, 496], '#033', 1.5);
line([1368, 537], [1454, 528], '#033', 1.5);
line([1365, 567], [1447, 558], '#033', 1.5);
line([1363, 595], [1442, 585], '#033', 1.5);

// supports along the bottom edge
const ARROW = '#0d6a20';
[[85, 730], [185, 705], [285, 683], [378, 660], [472, 640], [562, 620], [650, 600], [735, 580], [768, 572],
 [797, 567], [825, 560], [860, 553], [880, 548], [900, 545], [945, 530], [995, 522], [1025, 515], [1052, 510],
 [1097, 498], [1140, 490], [1217, 472], [1290, 455], [1358, 440], [1430, 422], [1492, 410]].forEach(a => {
    const x = 870 + a[0] / 2.018;
    const y = 440 + a[1] / 3;
    line([x, y], [x, y + 17], ARROW);
    line([x, y], [x - 5, y + 10], ARROW);
    line([x, y], [x + 8, y + 9], ARROW);
    line([x, y], [x - 2, y + 14], ARROW);
});

// red marks on the floor
[[1620, 328], [989, 302], [961, 311], [1050, 282]].forEach(p => {
    out += '<ellipse cx="' + p[0] + '" cy="' + p[1] + '" rx="4" ry="1.5" fill="#8a1010"/>';
});

document.getElementById('scene').innerHTML = out;
```
